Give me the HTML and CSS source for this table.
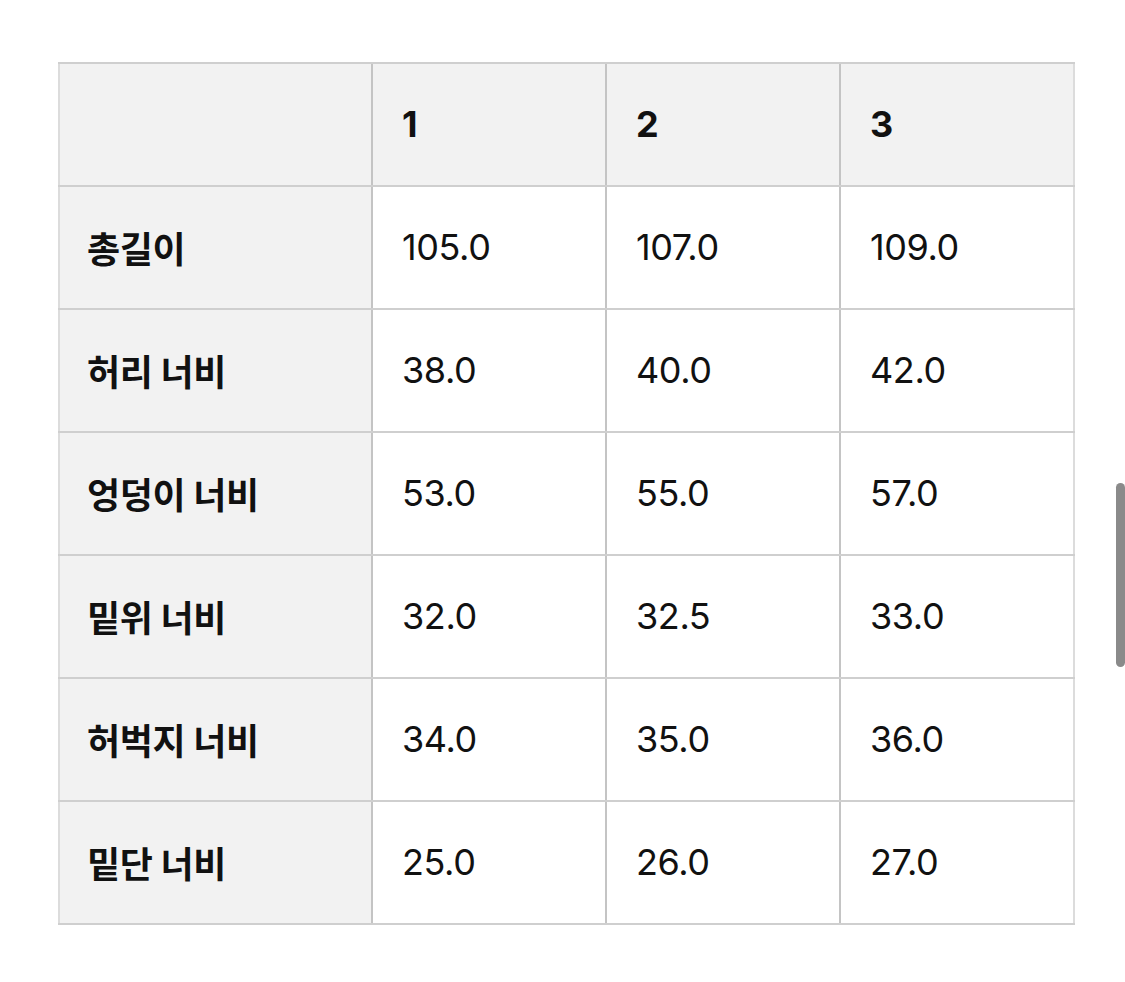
FILE: index.html
```html
<!DOCTYPE html>
<html lang="ko">
<head>
<meta charset="utf-8">
<link rel="stylesheet" href="styles.css">
</head>
<body>
<div class="page">
  <table class="size-table">
    <colgroup>
      <col class="c-label"><col class="c-val"><col class="c-val"><col class="c-val">
    </colgroup>
    <thead>
      <tr><th class="label"></th><th>1</th><th>2</th><th>3</th></tr>
    </thead>
    <tbody>
      <tr><th class="label">총길이</th><td>105.0</td><td>107.0</td><td>109.0</td></tr>
      <tr><th class="label">허리 너비</th><td>38.0</td><td>40.0</td><td>42.0</td></tr>
      <tr><th class="label">엉덩이 너비</th><td>53.0</td><td>55.0</td><td>57.0</td></tr>
      <tr><th class="label">밑위 너비</th><td>32.0</td><td>32.5</td><td>33.0</td></tr>
      <tr><th class="label">허벅지 너비</th><td>34.0</td><td>35.0</td><td>36.0</td></tr>
      <tr><th class="label">밑단 너비</th><td>25.0</td><td>26.0</td><td>27.0</td></tr>
    </tbody>
  </table>
</div>
<div class="scrollbar"></div>
</body>
</html>
```
FILE: styles.css
```css
html, body {
  margin: 0;
  padding: 0;
  background: #ffffff;
}
body {
  font-family: "Inter", "Noto Sans CJK KR", sans-serif;
  color: #111111;
}
.page {
  padding: 62px 50px 0 58px;
}
.size-table {
  border-collapse: collapse;
  table-layout: fixed;
  width: 1017px;
  border-left: 2px solid #dcdcdc;
  border-right: 2px solid #dcdcdc;
}
.c-label { width: 313px; }
.c-val { width: 234px; }
.size-table th,
.size-table td {
  height: 123px;
  padding: 0 0 2px 29px;
  box-sizing: border-box;
  text-align: left;
  vertical-align: middle;
  font-size: 36px;
  border-top: 2px solid #cfcfcf;
  border-bottom: 2px solid #cfcfcf;
  border-left: 2px solid #c4c4c4;
  letter-spacing: -0.4px;
}
.size-table thead th {
  background: #f2f2f2;
  font-weight: 700;
}
.size-table th.label {
  background: #f2f2f2;
  font-weight: 700;
  padding-left: 27px;
  border-left: 2px solid #dcdcdc;
}
.size-table td {
  font-weight: 400;
}
.scrollbar {
  position: absolute;
  left: 1116px;
  top: 483px;
  width: 9px;
  height: 184px;
  border-radius: 5px;
  background: #8a8a8a;
}
```
